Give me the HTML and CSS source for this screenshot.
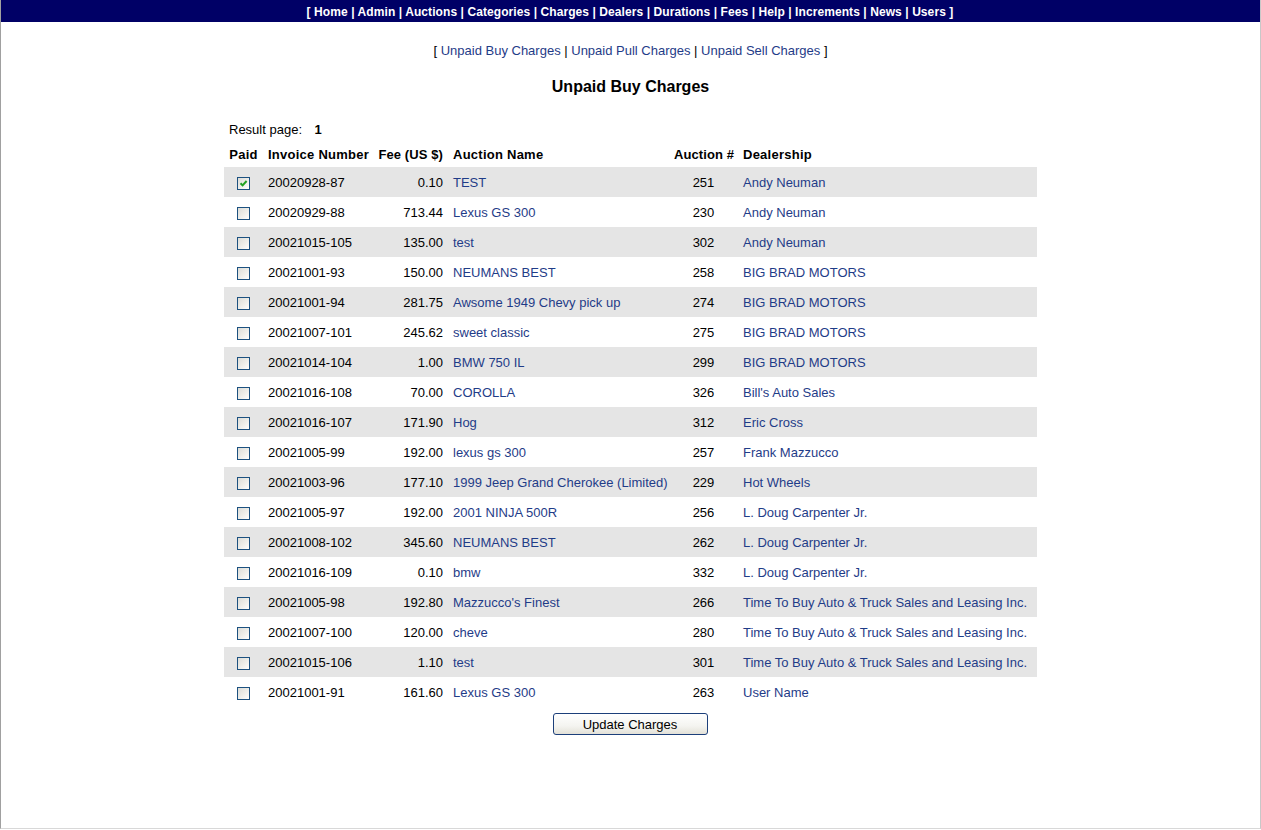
FILE: index.html
```html
<!DOCTYPE html>
<html>
<head>
<meta charset="utf-8">
<title>Unpaid Buy Charges</title>
<link rel="stylesheet" href="styles.css">
</head>
<body>
<div class="frame">
  <div class="topnav">[ <a href="#">Home</a> | <a href="#">Admin</a> | <a href="#">Auctions</a> | <a href="#">Categories</a> | <a href="#">Charges</a> | <a href="#">Dealers</a> | <a href="#">Durations</a> | <a href="#">Fees</a> | <a href="#">Help</a> | <a href="#">Increments</a> | <a href="#">News</a> | <a href="#">Users</a> ]</div>
  <div class="subnav">[ <a href="#">Unpaid Buy Charges</a> | <a href="#">Unpaid Pull Charges</a> | <a href="#">Unpaid Sell Charges</a> ]</div>
  <h1 class="title">Unpaid Buy Charges</h1>
  <form class="chargeform">
    <table class="charges">
      <colgroup>
        <col class="w-paid">
        <col class="w-inv">
        <col class="w-fee">
        <col class="w-name">
        <col class="w-num">
        <col class="w-dealer">
      </colgroup>
      <tr class="meta"><td colspan="6">Result page: <b class="pagenum">1</b></td></tr>
      <tr class="head">
        <th class="c-paid">Paid</th>
        <th class="c-inv">Invoice Number</th>
        <th class="c-fee">Fee (US $)</th>
        <th class="c-name">Auction Name</th>
        <th class="c-num">Auction #</th>
        <th class="c-dealer">Dealership</th>
      </tr>
      <tr class="odd"><td class="c-paid"><span class="cb checked"><svg width="11" height="11" viewBox="0 0 11 11"><path d="M2.5 5.2 L4.6 7.4 L8.6 3" fill="none" stroke="#21a121" stroke-width="2"/></svg></span></td><td>20020928-87</td><td class="c-fee">0.10</td><td><a href="#">TEST</a></td><td class="c-num">251</td><td><a href="#">Andy Neuman</a></td></tr>
      <tr><td class="c-paid"><span class="cb"></span></td><td>20020929-88</td><td class="c-fee">713.44</td><td><a href="#">Lexus GS 300</a></td><td class="c-num">230</td><td><a href="#">Andy Neuman</a></td></tr>
      <tr class="odd"><td class="c-paid"><span class="cb"></span></td><td>20021015-105</td><td class="c-fee">135.00</td><td><a href="#">test</a></td><td class="c-num">302</td><td><a href="#">Andy Neuman</a></td></tr>
      <tr><td class="c-paid"><span class="cb"></span></td><td>20021001-93</td><td class="c-fee">150.00</td><td><a href="#">NEUMANS BEST</a></td><td class="c-num">258</td><td><a href="#">BIG BRAD MOTORS</a></td></tr>
      <tr class="odd"><td class="c-paid"><span class="cb"></span></td><td>20021001-94</td><td class="c-fee">281.75</td><td><a href="#">Awsome 1949 Chevy pick up</a></td><td class="c-num">274</td><td><a href="#">BIG BRAD MOTORS</a></td></tr>
      <tr><td class="c-paid"><span class="cb"></span></td><td>20021007-101</td><td class="c-fee">245.62</td><td><a href="#">sweet classic</a></td><td class="c-num">275</td><td><a href="#">BIG BRAD MOTORS</a></td></tr>
      <tr class="odd"><td class="c-paid"><span class="cb"></span></td><td>20021014-104</td><td class="c-fee">1.00</td><td><a href="#">BMW 750 IL</a></td><td class="c-num">299</td><td><a href="#">BIG BRAD MOTORS</a></td></tr>
      <tr><td class="c-paid"><span class="cb"></span></td><td>20021016-108</td><td class="c-fee">70.00</td><td><a href="#">COROLLA</a></td><td class="c-num">326</td><td><a href="#">Bill's Auto Sales</a></td></tr>
      <tr class="odd"><td class="c-paid"><span class="cb"></span></td><td>20021016-107</td><td class="c-fee">171.90</td><td><a href="#">Hog</a></td><td class="c-num">312</td><td><a href="#">Eric Cross</a></td></tr>
      <tr><td class="c-paid"><span class="cb"></span></td><td>20021005-99</td><td class="c-fee">192.00</td><td><a href="#">lexus gs 300</a></td><td class="c-num">257</td><td><a href="#">Frank Mazzucco</a></td></tr>
      <tr class="odd"><td class="c-paid"><span class="cb"></span></td><td>20021003-96</td><td class="c-fee">177.10</td><td><a href="#">1999 Jeep Grand Cherokee (Limited)</a></td><td class="c-num">229</td><td><a href="#">Hot Wheels</a></td></tr>
      <tr><td class="c-paid"><span class="cb"></span></td><td>20021005-97</td><td class="c-fee">192.00</td><td><a href="#">2001 NINJA 500R</a></td><td class="c-num">256</td><td><a href="#">L. Doug Carpenter Jr.</a></td></tr>
      <tr class="odd"><td class="c-paid"><span class="cb"></span></td><td>20021008-102</td><td class="c-fee">345.60</td><td><a href="#">NEUMANS BEST</a></td><td class="c-num">262</td><td><a href="#">L. Doug Carpenter Jr.</a></td></tr>
      <tr><td class="c-paid"><span class="cb"></span></td><td>20021016-109</td><td class="c-fee">0.10</td><td><a href="#">bmw</a></td><td class="c-num">332</td><td><a href="#">L. Doug Carpenter Jr.</a></td></tr>
      <tr class="odd"><td class="c-paid"><span class="cb"></span></td><td>20021005-98</td><td class="c-fee">192.80</td><td><a href="#">Mazzucco's Finest</a></td><td class="c-num">266</td><td><a href="#">Time To Buy Auto &amp; Truck Sales and Leasing Inc.</a></td></tr>
      <tr><td class="c-paid"><span class="cb"></span></td><td>20021007-100</td><td class="c-fee">120.00</td><td><a href="#">cheve</a></td><td class="c-num">280</td><td><a href="#">Time To Buy Auto &amp; Truck Sales and Leasing Inc.</a></td></tr>
      <tr class="odd"><td class="c-paid"><span class="cb"></span></td><td>20021015-106</td><td class="c-fee">1.10</td><td><a href="#">test</a></td><td class="c-num">301</td><td><a href="#">Time To Buy Auto &amp; Truck Sales and Leasing Inc.</a></td></tr>
      <tr><td class="c-paid"><span class="cb"></span></td><td>20021001-91</td><td class="c-fee">161.60</td><td><a href="#">Lexus GS 300</a></td><td class="c-num">263</td><td><a href="#">User Name</a></td></tr>
    </table>
    <div class="actions"><button type="button" class="btn">Update Charges</button></div>
  </form>
</div>
</body>
</html>
```

FILE: styles.css
```css
html, body {
  margin: 0;
  padding: 0;
  background: #ffffff;
}
body {
  font-family: "Liberation Sans", Arial, sans-serif;
  font-size: 13px;
  color: #000000;
}
.frame {
  box-sizing: border-box;
  width: 1261px;
  height: 829px;
  border-left: 1px solid #a0a0a0;
  border-right: 1px solid #c8c8c8;
  border-bottom: 1px solid #d8d8d8;
  overflow: hidden;
}
.topnav {
  background: #000066;
  color: #ffffff;
  height: 22px;
  line-height: 25px;
  text-align: center;
  font-weight: bold;
  font-size: 12px;
  letter-spacing: 0.08px;
  margin-left: -1px;
}
.topnav a {
  color: #ffffff;
  text-decoration: none;
}
.subnav {
  margin-top: 21px;
  line-height: 16px;
  text-align: center;
}
a {
  color: #1f3c88;
  text-decoration: none;
}
.title {
  margin: 18px 0 0 0;
  font-size: 16px;
  line-height: 19px;
  text-align: center;
  font-weight: bold;
}
.chargeform {
  margin: 21px 0 0 0;
}
.charges {
  border-collapse: collapse;
  border-spacing: 0;
  margin: 0 auto;
  table-layout: fixed;
  width: 813px;
}
.w-paid { width: 39px; }
.w-inv { width: 110px; }
.w-fee { width: 75px; }
.w-name { width: 221px; }
.w-num { width: 69px; }
.w-dealer { width: 299px; }
.charges td, .charges th {
  padding: 5px;
  line-height: 15px;
  white-space: nowrap;
  vertical-align: middle;
  overflow: visible;
}
.charges th {
  text-align: left;
  font-weight: bold;
  letter-spacing: 0.25px;
}
.charges th.c-num, .charges th.c-fee {
  letter-spacing: 0.1px;
}
.pagenum {
  margin-left: 9px;
}
.charges td {
  height: 20px;
}
.charges tr.meta td, .charges tr.head th {
  height: 15px;
}
.charges tr.odd td {
  background: #e5e5e5;
}
.charges .c-paid {
  text-align: center;
}
.charges .c-fee {
  text-align: right;
}
.charges .c-num {
  text-align: center;
}
.cb {
  display: inline-block;
  box-sizing: border-box;
  width: 13px;
  height: 13px;
  border: 1px solid #1c5180;
  background: linear-gradient(135deg, #dcdcd7 0%, #f0f0ec 60%, #ffffff 100%);
  vertical-align: middle;
}
.cb svg {
  display: block;
}
.actions {
  text-align: center;
  margin-top: 6px;
}
.btn {
  box-sizing: border-box;
  width: 155px;
  height: 22px;
  font-family: "Liberation Sans", Arial, sans-serif;
  font-size: 13px;
  color: #000000;
  border: 1px solid #1c3f7a;
  border-radius: 3px;
  background: linear-gradient(#ffffff 0%, #f4f4f0 60%, #e3e1d8 100%);
  padding: 0;
  margin-left: -1px;
}
```
